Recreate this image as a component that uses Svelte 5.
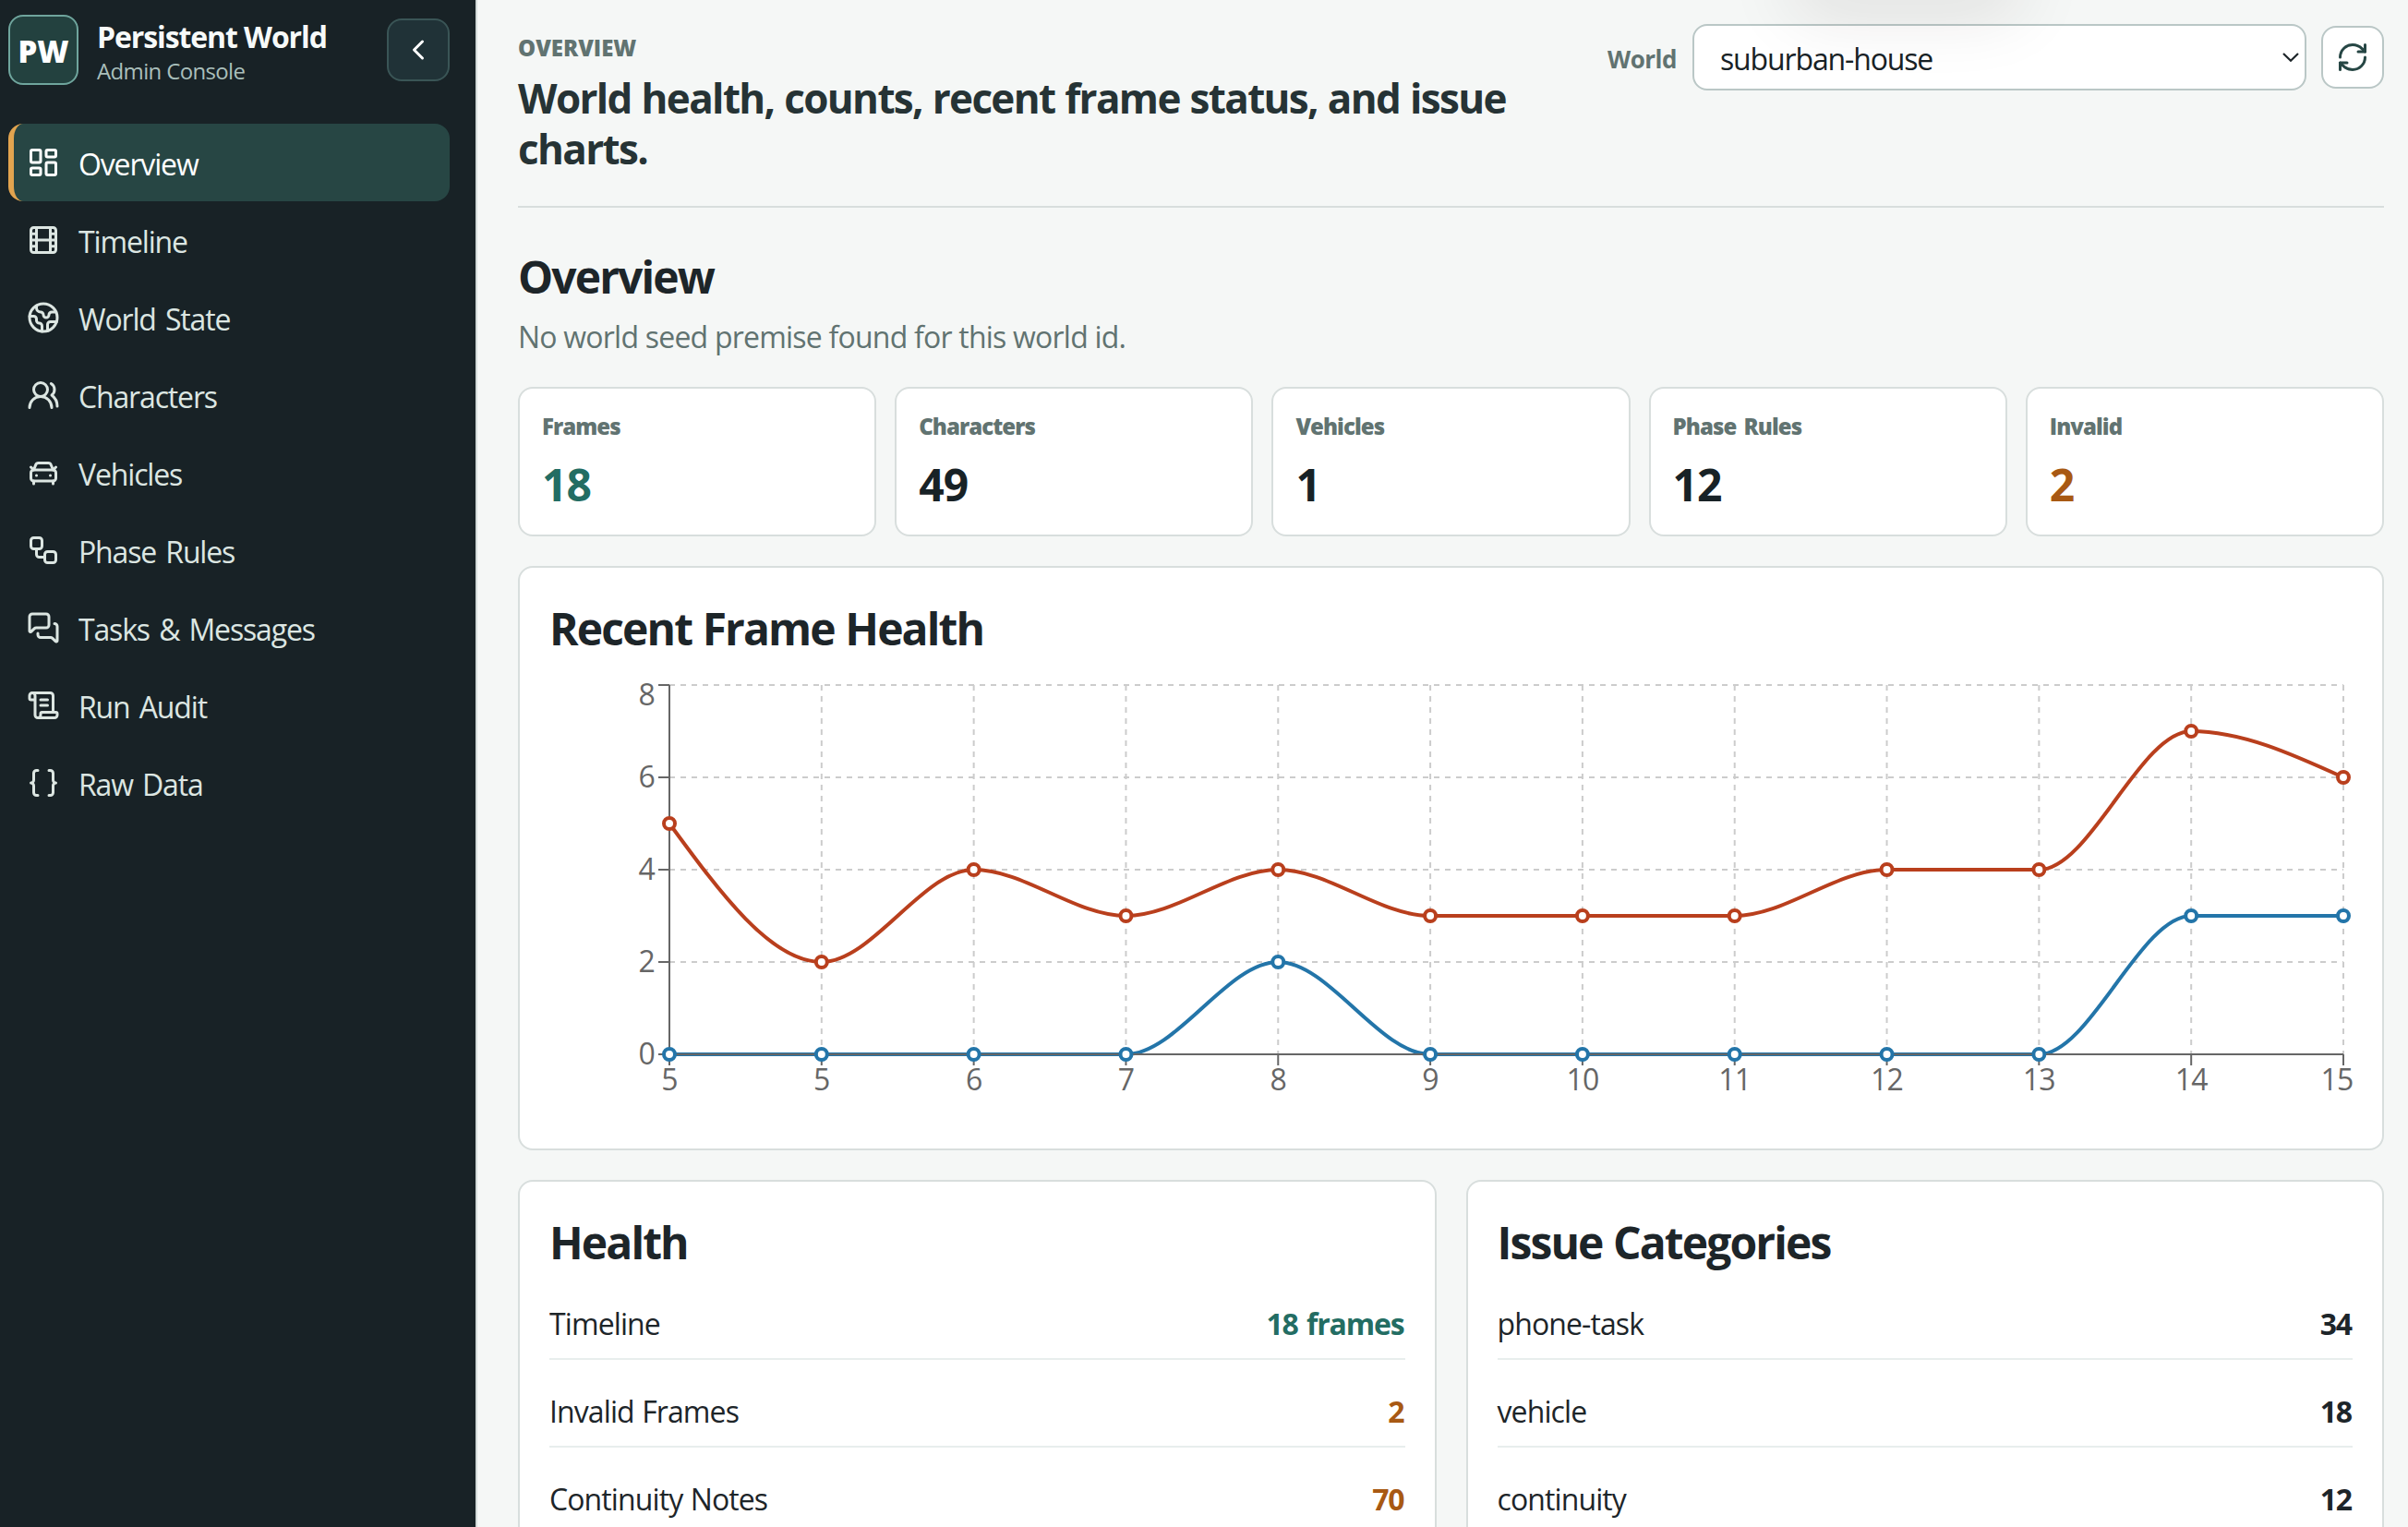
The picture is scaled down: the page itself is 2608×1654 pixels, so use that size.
<script>
    const navItems = [
        { label: 'Overview', icon: 'dashboard' },
        { label: 'Timeline', icon: 'film' },
        { label: 'World State', icon: 'earth' },
        { label: 'Characters', icon: 'users' },
        { label: 'Vehicles', icon: 'car' },
        { label: 'Phase Rules', icon: 'workflow' },
        { label: 'Tasks & Messages', icon: 'messages' },
        { label: 'Run Audit', icon: 'scroll' },
        { label: 'Raw Data', icon: 'braces' }
    ];

    const stats = [
        { label: 'Frames', value: 18, tone: 'good' },
        { label: 'Characters', value: 49 },
        { label: 'Vehicles', value: 1 },
        { label: 'Phase Rules', value: 12 },
        { label: 'Invalid', value: 2, tone: 'warn' }
    ];

    const health = [
        { label: 'Timeline', value: '18 frames', tone: 'good' },
        { label: 'Invalid Frames', value: '2', tone: 'warn' },
        { label: 'Continuity Notes', value: '70', tone: 'warn' }
    ];

    const issues = [
        { label: 'phone-task', value: '34' },
        { label: 'vehicle', value: '18' },
        { label: 'continuity', value: '12' }
    ];

    const frames = [5, 5, 6, 7, 8, 9, 10, 11, 12, 13, 14, 15];
    const series = [
        { color: '#b93f1d', values: [5, 2, 4, 3, 4, 3, 3, 3, 4, 4, 7, 6] },
        { color: '#2375a9', values: [0, 0, 0, 0, 2, 0, 0, 0, 0, 0, 3, 3] }
    ];
    const yTicks = [0, 2, 4, 6, 8];

    // plot area inside the 1953x480 chart
    const plot = { left: 130, right: 1943, top: 10, bottom: 410 };
    const x = (i) => plot.left + (i * (plot.right - plot.left)) / (frames.length - 1);
    const y = (v) => plot.bottom - (v * (plot.bottom - plot.top)) / 8;

    // monotone cubic interpolation, so curves never overshoot the points
    function linePath(values) {
        const n = values.length;
        const step = x(1) - x(0);
        const ys = values.map(y);
        const d = ys.slice(1).map((v, i) => (v - ys[i]) / step);
        const m = ys.map((_, i) => {
            if (i === 0 || i === n - 1) return 0;
            if (d[i - 1] * d[i] <= 0) return 0;
            return Math.sign(d[i]) * Math.min(Math.abs(d[i - 1]), Math.abs(d[i]), 0.25 * Math.abs(d[i - 1] + d[i])) * 2;
        });
        m[0] = (3 * d[0] - m[1]) / 2;
        m[n - 1] = (3 * d[n - 2] - m[n - 2]) / 2;

        let path = `M${x(0)},${ys[0]}`;
        for (let i = 1; i < n; i++) {
            const h = step / 3;
            path += `C${x(i - 1) + h},${ys[i - 1] + h * m[i - 1]},${x(i) - h},${ys[i] - h * m[i]},${x(i)},${ys[i]}`;
        }
        return path;
    }
</script>

{#snippet icon(name)}
    <svg class="icon" viewBox="0 0 24 24" fill="none" stroke="currentColor" stroke-width="2" stroke-linecap="round" stroke-linejoin="round" aria-hidden="true">
        {#if name === 'dashboard'}
            <rect width="7" height="9" x="3" y="3" rx="1" />
            <rect width="7" height="5" x="14" y="3" rx="1" />
            <rect width="7" height="9" x="14" y="12" rx="1" />
            <rect width="7" height="5" x="3" y="16" rx="1" />
        {:else if name === 'film'}
            <rect width="18" height="18" x="3" y="3" rx="2" />
            <path d="M7 3v18M3 7.5h4M3 12h18M3 16.5h4M17 3v18M17 7.5h4M17 16.5h4" />
        {:else if name === 'earth'}
            <path d="M21.54 15H17a2 2 0 0 0-2 2v4.54" />
            <path d="M7 3.34V5a3 3 0 0 0 3 3a2 2 0 0 1 2 2c0 1.1.9 2 2 2a2 2 0 0 0 2-2c0-1.1.9-2 2-2h3.17" />
            <path d="M11 21.95V18a2 2 0 0 0-2-2a2 2 0 0 1-2-2v-1a2 2 0 0 0-2-2H2.05" />
            <circle cx="12" cy="12" r="10" />
        {:else if name === 'users'}
            <path d="M18 21a8 8 0 0 0-16 0" />
            <circle cx="10" cy="8" r="5" />
            <path d="M22 20c0-3.37-2-6.5-4-8a5 5 0 0 0-.45-8.3" />
        {:else if name === 'car'}
            <path d="m21 8-2 2-1.5-3.7A2 2 0 0 0 15.646 5H8.4a2 2 0 0 0-1.903 1.257L5 10 3 8" />
            <path d="M7 14h.01M17 14h.01" />
            <rect width="18" height="8" x="3" y="10" rx="2" />
            <path d="M5 18v2M19 18v2" />
        {:else if name === 'workflow'}
            <rect width="8" height="8" x="3" y="3" rx="2" />
            <path d="M7 11v4a2 2 0 0 0 2 2h4" />
            <rect width="8" height="8" x="13" y="13" rx="2" />
        {:else if name === 'messages'}
            <path d="M16 10a2 2 0 0 1-2 2H6.828a2 2 0 0 0-1.414.586l-2.202 2.202A.71.71 0 0 1 2 14.286V4a2 2 0 0 1 2-2h10a2 2 0 0 1 2 2z" />
            <path d="M20 9a2 2 0 0 1 2 2v10.286a.71.71 0 0 1-1.212.502l-2.202-2.202A2 2 0 0 0 17.172 19H10a2 2 0 0 1-2-2v-1" />
        {:else if name === 'scroll'}
            <path d="M15 12h-5M15 8h-5" />
            <path d="M19 17V5a2 2 0 0 0-2-2H4" />
            <path d="M8 21h12a2 2 0 0 0 2-2v-1a1 1 0 0 0-1-1H11a1 1 0 0 0-1 1v1a2 2 0 1 1-4 0V5a2 2 0 1 0-4 0v2a1 1 0 0 0 1 1h3" />
        {:else if name === 'braces'}
            <path d="M8 3H7a2 2 0 0 0-2 2v5a2 2 0 0 1-2 2 2 2 0 0 1 2 2v5c0 1.1.9 2 2 2h1" />
            <path d="M16 21h1a2 2 0 0 0 2-2v-5c0-1.1.9-2 2-2a2 2 0 0 1-2-2V5a2 2 0 0 0-2-2h-1" />
        {:else if name === 'left'}
            <path d="m15 18-6-6 6-6" />
        {:else if name === 'refresh'}
            <path d="M3 12a9 9 0 0 1 9-9 9.75 9.75 0 0 1 6.74 2.74L21 8" />
            <path d="M21 3v5h-5" />
            <path d="M21 12a9 9 0 0 1-9 9 9.75 9.75 0 0 1-6.74-2.74L3 16" />
            <path d="M8 16H3v5" />
        {/if}
    </svg>
{/snippet}

{#snippet detailPanel(title, rows)}
    <section class="panel">
        <h2>{title}</h2>
        {#each rows as row}
            <div class="row">
                <span>{row.label}</span>
                <strong class={row.tone}>{row.value}</strong>
            </div>
        {/each}
    </section>
{/snippet}

<div class="shell">
    <aside class="sidebar">
        <div class="brand">
            <div class="logo">PW</div>
            <div class="brand-text">
                <strong>Persistent World</strong>
                <span>Admin Console</span>
            </div>
            <button type="button" class="collapse" aria-label="Collapse sidebar">{@render icon('left')}</button>
        </div>
        <nav>
            {#each navItems as item, i}
                <a href="#top" class="nav-item" class:active={i === 0}>
                    {@render icon(item.icon)}
                    <span>{item.label}</span>
                </a>
            {/each}
        </nav>
    </aside>

    <main>
        <div class="top-glow"></div>
        <header>
            <div class="heading">
                <p class="eyebrow">OVERVIEW</p>
                <h1>World health, counts, recent frame status, and issue charts.</h1>
            </div>
            <div class="controls">
                <label for="world">World</label>
                <div class="select-wrap">
                    <select id="world">
                        <option>suburban-house</option>
                    </select>
                    <svg class="caret" viewBox="0 0 18 10" fill="none" stroke="currentColor" stroke-width="2.2"><path d="M1 1l8 7.8L17 1" /></svg>
                </div>
                <button type="button" class="refresh" aria-label="Refresh">{@render icon('refresh')}</button>
            </div>
        </header>

        <h2 class="page-title">Overview</h2>
        <p class="premise">No world seed premise found for this world id.</p>

        <div class="stats">
            {#each stats as stat}
                <div class="stat">
                    <span>{stat.label}</span>
                    <strong class={stat.tone}>{stat.value}</strong>
                </div>
            {/each}
        </div>

        <section class="panel">
            <h2>Recent Frame Health</h2>
            <svg class="chart" viewBox="0 0 1953 480">
                <g class="grid">
                    {#each yTicks as t}
                        <line x1={plot.left} x2={plot.right} y1={y(t)} y2={y(t)} />
                    {/each}
                    {#each frames as _, i}
                        <line x1={x(i)} x2={x(i)} y1={plot.top} y2={plot.bottom} />
                    {/each}
                </g>
                {#each series as s}
                    <path class="line" d={linePath(s.values)} stroke={s.color} />
                {/each}
                <g class="axis">
                    <line x1={plot.left} x2={plot.right} y1={plot.bottom} y2={plot.bottom} />
                    <line x1={plot.left} x2={plot.left} y1={plot.top} y2={plot.bottom} />
                    {#each frames as _, i}
                        <line x1={x(i)} x2={x(i)} y1={plot.bottom} y2={plot.bottom + 12} />
                    {/each}
                    {#each yTicks as t}
                        <line x1={plot.left - 12} x2={plot.left} y1={y(t)} y2={y(t)} />
                    {/each}
                </g>
                <g class="labels">
                    {#each frames as f, i}
                        <!-- last label is pulled in so it stays inside the chart -->
                        <text x={Math.min(x(i), 1936)} y="449" text-anchor="middle">{f}</text>
                    {/each}
                    {#each yTicks as t}
                        <text x="114" y={Math.max(y(t) + 11, 32)} text-anchor="end">{t}</text>
                    {/each}
                </g>
                {#each series as s}
                    {#each s.values as v, i}
                        <circle cx={x(i)} cy={y(v)} r="6" fill="#fff" stroke={s.color} stroke-width="4" />
                    {/each}
                {/each}
            </svg>
        </section>

        <div class="columns">
            {@render detailPanel('Health', health)}
            {@render detailPanel('Issue Categories', issues)}
        </div>
    </main>
</div>

<style>
    :global(body) {
        margin: 0;
        overflow: hidden;
        background: #f5f7f6;
    }

    .shell {
        --ink: #1d2529;
        --muted: #617371;
        --line: #d8dedd;
        display: flex;
        height: 1654px;
        overflow: hidden;
        background: #f5f7f6;
        color: var(--ink);
        font-family: "Segoe UI", "Open Sans", "Noto Sans", sans-serif;
        font-size: 32px;
        line-height: 48px;
        letter-spacing: -0.8px;
    }

    .shell :global(*) {
        box-sizing: border-box;
    }

    h1, h2, p {
        margin: 0;
    }

    .icon {
        display: block;
        flex: none;
        width: 36px;
        height: 36px;
    }

    /* Sidebar */
    .sidebar {
        flex: none;
        width: 517px;
        padding: 16px 28px 0 9px;
        background: #182226;
        border-right: 2px solid #d3dad9;
    }

    .brand {
        display: flex;
        align-items: center;
        height: 76px;
        gap: 20px;
        margin-bottom: 42px;
    }

    .logo {
        display: flex;
        align-items: center;
        justify-content: center;
        width: 76px;
        height: 76px;
        padding-top: 4px;
        border: 2px solid #6fa59d;
        border-radius: 16px;
        background: #23413f;
        color: #fff;
        font-size: 33px;
        font-weight: 800;
        letter-spacing: 0;
    }

    .brand-text {
        display: flex;
        flex: 1;
        flex-direction: column;
        gap: 1px;
        padding-top: 5px;
    }

    .brand-text strong {
        color: #f7faf9;
        line-height: 40px;
        letter-spacing: -1.1px;
        white-space: nowrap;
    }

    .brand-text span {
        color: #a9bfbb;
        font-size: 24px;
        line-height: 32px;
        letter-spacing: -0.65px;
    }

    button {
        display: flex;
        flex: none;
        align-items: center;
        justify-content: center;
        width: 68px;
        height: 68px;
        padding: 0;
        border-radius: 16px;
    }

    .collapse {
        border: 2px solid #3a5556;
        background: #203237;
        color: #fff;
    }

    .nav-item {
        display: flex;
        align-items: center;
        gap: 20px;
        height: 84px;
        padding-left: 14px;
        border-left: 6px solid transparent;
        border-radius: 16px;
        color: #dce6e2;
        letter-spacing: -1.15px;
        word-spacing: 3px;
        text-decoration: none;
    }

    .nav-item span {
        padding-top: 3px;
    }

    .nav-item.active {
        border-left-color: #e2a44f;
        background: #274644;
        color: #fff;
    }

    /* Main column */
    main {
        position: relative;
        flex: 1;
        min-width: 0;
        padding: 26px 26px 0 44px;
    }

    /* soft shadow falling in from above the page */
    .top-glow {
        position: absolute;
        z-index: 2;
        top: -60px;
        left: 1428px;
        width: 240px;
        height: 50px;
        border-radius: 30px;
        box-shadow: 0 16px 76px 8px rgba(40, 20, 20, 0.11);
        pointer-events: none;
    }

    header {
        display: flex;
        align-items: flex-start;
        height: 199px;
        border-bottom: 2px solid var(--line);
    }

    .heading {
        width: 1150px;
        padding-top: 8px;
    }

    .eyebrow {
        margin-bottom: 9px;
        color: var(--muted);
        font-size: 24px;
        font-weight: 800;
        line-height: 36px;
        letter-spacing: 0;
    }

    h1 {
        color: #263335;
        font-size: 44px;
        font-weight: 700;
        line-height: 55px;
        letter-spacing: -1.65px;
        word-spacing: 1px;
    }

    .controls {
        display: flex;
        align-items: center;
        margin-left: auto;
    }

    .controls label {
        padding-top: 3px;
        margin-right: 17px;
        color: var(--muted);
        font-size: 26px;
        font-weight: 700;
        letter-spacing: -0.5px;
    }

    .select-wrap {
        position: relative;
        width: 665px;
        margin-right: 16px;
    }

    select {
        display: block;
        width: 100%;
        height: 72px;
        padding: 4px 28px 0;
        appearance: none;
        border: 2px solid #bac7c6;
        border-radius: 16px;
        background: #fff;
        color: #182226;
        font: inherit;
        letter-spacing: -1.14px;
    }

    .caret {
        position: absolute;
        top: 31px;
        right: 8px;
        width: 18px;
        height: 10px;
        overflow: visible;
    }

    .refresh {
        border: 2px solid #bac7c6;
        background: #fff;
        color: #264644;
    }

    h2 {
        font-size: 48px;
        font-weight: 700;
        line-height: 60px;
        letter-spacing: -1.9px;
        word-spacing: 1px;
    }

    .page-title {
        margin-top: 45px;
    }

    .premise {
        margin: 11px 0 30px;
        color: var(--muted);
        letter-spacing: -0.78px;
    }

    .stats {
        display: grid;
        grid-template-columns: repeat(5, 1fr);
        gap: 20px;
        margin-bottom: 32px;
    }

    .stat {
        display: flex;
        flex-direction: column;
        gap: 15px;
        height: 162px;
        padding: 23px 24px 0;
        border: 2px solid var(--line);
        border-radius: 16px;
        background: #fff;
    }

    .stat span {
        color: var(--muted);
        font-size: 24px;
        font-weight: 800;
        line-height: 36px;
        letter-spacing: -0.95px;
        word-spacing: 3px;
    }

    .stat strong {
        color: #182226;
        font-size: 48px;
        line-height: 60px;
        letter-spacing: -1px;
    }

    .panel {
        padding: 36px 32px 32px;
        border: 2px solid var(--line);
        border-radius: 16px;
        background: #fff;
    }

    .chart {
        display: block;
        width: 1953px;
        height: 480px;
        margin-top: 21px;
        overflow: visible;
    }

    .grid line {
        stroke: #ccc;
        stroke-width: 2;
        stroke-dasharray: 6 6;
    }

    .axis line {
        stroke: #666;
        stroke-width: 2;
    }

    .line {
        fill: none;
        stroke-width: 4;
    }

    .labels text {
        fill: #666;
        font-size: 32px;
        letter-spacing: -0.8px;
    }

    .columns {
        display: grid;
        grid-template-columns: 1fr 1fr;
        gap: 32px;
        margin-top: 32px;
    }

    .row {
        display: flex;
        justify-content: space-between;
        padding: 32px 0 13px;
        border-bottom: 2px solid #e8eeed;
    }

    .row span {
        letter-spacing: -0.9px;
        word-spacing: 1px;
    }

    .row strong {
        padding-right: 1px;
        letter-spacing: -1.15px;
        word-spacing: 2px;
    }

    .columns h2 {
        margin-bottom: 2px;
    }

    strong.good {
        color: #236d63;
    }

    strong.warn {
        color: #a85913;
    }
</style>
